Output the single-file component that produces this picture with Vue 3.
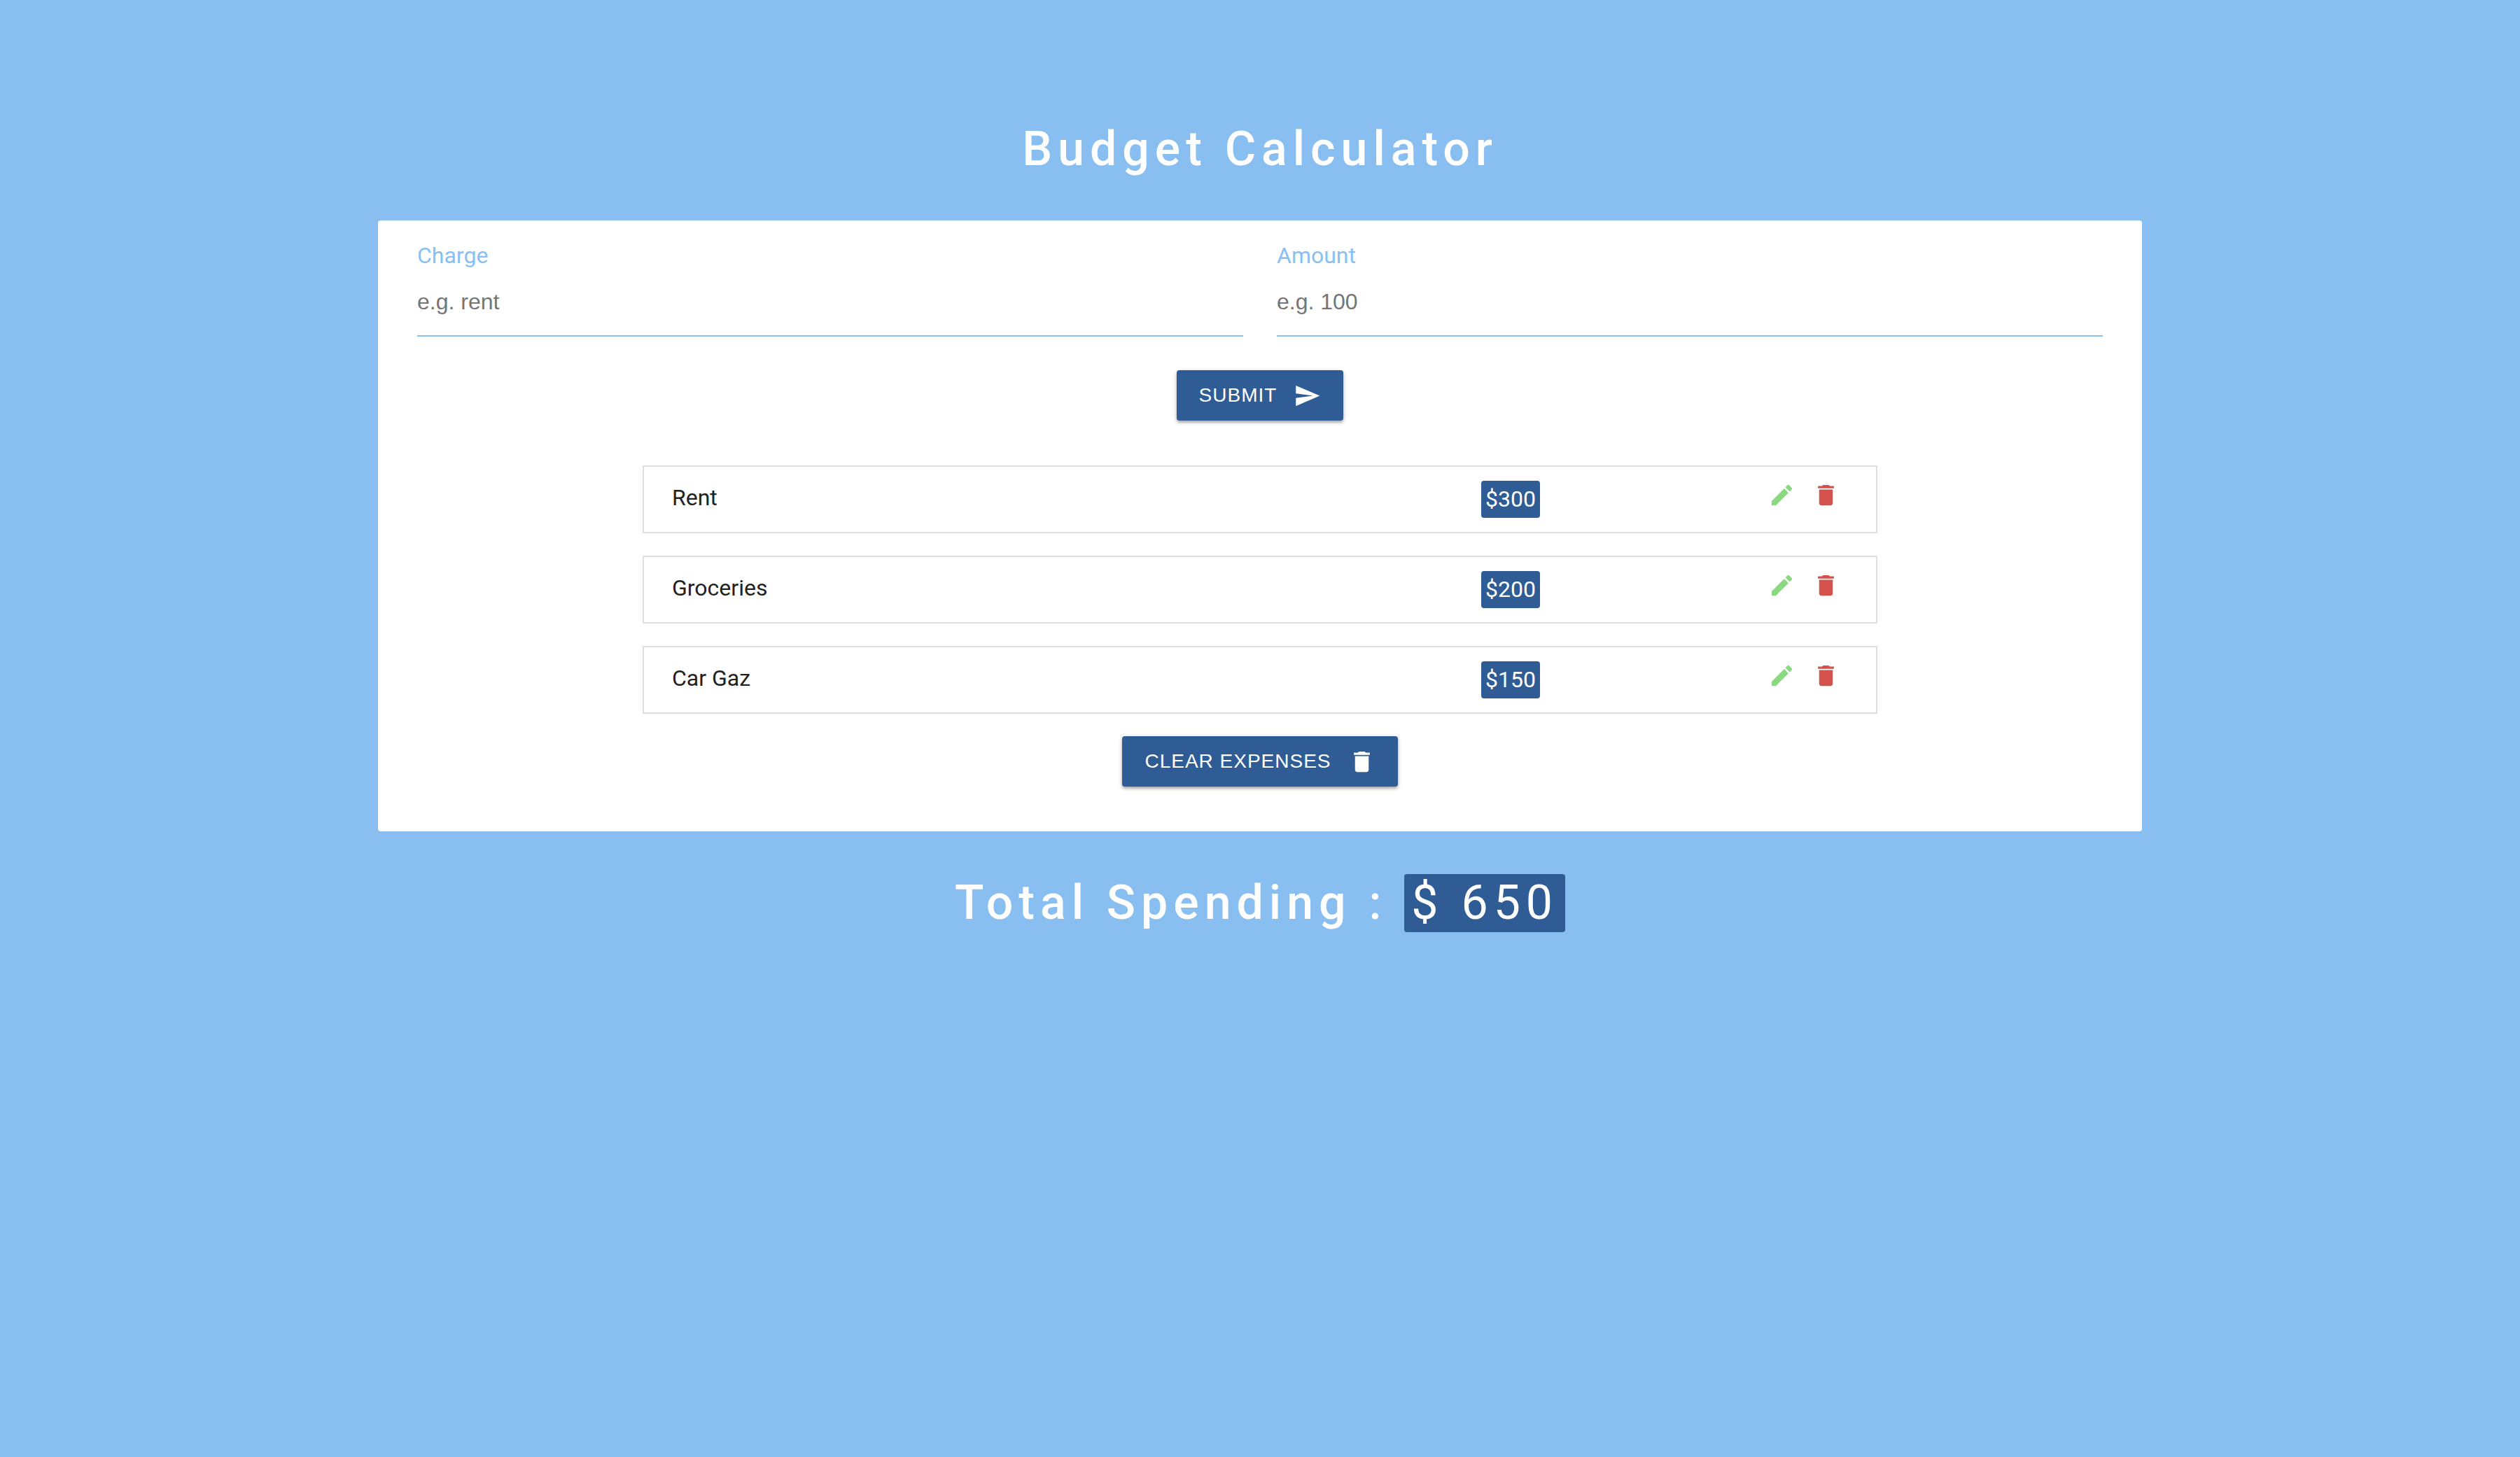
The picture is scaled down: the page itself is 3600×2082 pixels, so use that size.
<script setup>
import { computed, ref } from 'vue'

const charge = ref('')
const amount = ref('')
const expenses = ref([
  { id: 1, charge: 'Rent', amount: 300 },
  { id: 2, charge: 'Groceries', amount: 200 },
  { id: 3, charge: 'Car Gaz', amount: 150 },
])
const editing = ref(null)
const total = computed(() => expenses.value.reduce((sum, item) => sum + item.amount, 0))

function submit() {
  const value = Number(amount.value)
  if (!charge.value || !(value > 0)) return
  if (editing.value) {
    Object.assign(editing.value, { charge: charge.value, amount: value })
    editing.value = null
  } else {
    expenses.value.push({ id: Date.now(), charge: charge.value, amount: value })
  }
  charge.value = ''
  amount.value = ''
}

function edit(item) {
  editing.value = item
  charge.value = item.charge
  amount.value = String(item.amount)
}

function remove(item) {
  expenses.value = expenses.value.filter((other) => other !== item)
}
</script>

<template>
  <div class="page">
    <h1 class="heading">Budget Calculator</h1>
    <main class="card">
      <form class="form" @submit.prevent="submit">
        <div class="fields">
          <div class="field">
            <label for="charge">Charge</label>
            <input id="charge" v-model="charge" type="text" placeholder="e.g. rent" />
          </div>
          <div class="field">
            <label for="amount">Amount</label>
            <input id="amount" v-model="amount" type="text" inputmode="numeric" placeholder="e.g. 100" />
          </div>
        </div>
        <button class="btn" type="submit">
          Submit
          <svg class="icon" viewBox="0 0 24 24" aria-hidden="true"><path d="M2.01 21L23 12 2.01 3 2 10l15 2-15 2z" /></svg>
        </button>
      </form>
      <ul class="list">
        <li v-for="item in expenses" :key="item.id" class="item">
          <span>{{ item.charge }}</span>
          <span><span class="amount">${{ item.amount }}</span></span>
          <div class="actions">
            <button class="edit" type="button" aria-label="Edit" @click="edit(item)">
              <svg class="icon" viewBox="0 0 24 24" aria-hidden="true"><path d="M3 17.25V21h3.75L17.81 9.94l-3.75-3.75L3 17.25zM20.71 7.04c.39-.39.39-1.02 0-1.41l-2.34-2.34c-.39-.39-1.02-.39-1.41 0l-1.83 1.83 3.75 3.75 1.83-1.83z" /></svg>
            </button>
            <button class="delete" type="button" aria-label="Delete" @click="remove(item)">
              <svg class="icon" viewBox="0 0 24 24" aria-hidden="true"><path d="M6 19c0 1.1.9 2 2 2h8c1.1 0 2-.9 2-2V7H6v12zM19 4h-3.5l-1-1h-5l-1 1H5v2h14V4z" /></svg>
            </button>
          </div>
        </li>
      </ul>
      <button class="btn" type="button" @click="expenses = []">
        Clear expenses
        <svg class="icon" viewBox="0 0 24 24" aria-hidden="true"><path d="M6 19c0 1.1.9 2 2 2h8c1.1 0 2-.9 2-2V7H6v12zM19 4h-3.5l-1-1h-5l-1 1H5v2h14V4z" /></svg>
      </button>
    </main>
    <h1 class="heading">Total Spending : <span class="total">$ {{ total }}</span></h1>
  </div>
</template>

<style>
body {
  margin: 0;
  background: #89bef0;
}
</style>

<style scoped>
.page {
  box-sizing: border-box;
  min-height: 100vh;
  padding-top: 161px;
  background: #89bef0;
  color: #222;
  font-family: Roboto, sans-serif;
  font-size: 32px;
  line-height: 48px;
}
.heading {
  margin: 0;
  color: #fff;
  font-size: 68px;
  font-weight: 500;
  line-height: 104px;
  letter-spacing: 8px;
  text-align: center;
}
.card {
  box-sizing: border-box;
  display: flex;
  flex-direction: column;
  align-items: center;
  width: 70%;
  margin: 50px auto;
  padding: 26px 56px 64px;
  border-radius: 4px;
  background: #fff;
}
.form {
  display: flex;
  flex-direction: column;
  align-items: center;
  gap: 48px;
  width: 100%;
}
.fields {
  display: grid;
  grid-template-columns: 1fr 1fr;
  gap: 48px;
  width: 100%;
}
.field {
  display: flex;
  flex-direction: column;
}
.field label {
  color: #88c0f4;
}
.field input {
  box-sizing: border-box;
  width: 100%;
  height: 92px;
  padding: 0 0 6px;
  border: 0;
  border-bottom: 2px solid #88c0f4;
  background: transparent;
  color: #222;
  font: 32px "Liberation Sans", Arial, sans-serif;
  outline: 0;
}
.field input::placeholder {
  color: #757575;
}
.btn {
  display: flex;
  align-items: center;
  gap: 24px;
  height: 72px;
  padding: 0 32px;
  border: 0;
  border-radius: 4px;
  background: #2f5c94;
  box-shadow: 0 2px 6px rgba(0, 0, 0, 0.24), 0 3px 3px rgba(0, 0, 0, 0.16);
  color: #fff;
  font: 28px "Liberation Sans", Arial, sans-serif;
  letter-spacing: 1px;
  text-transform: uppercase;
  cursor: pointer;
}
.icon {
  display: block;
  width: 39px;
  height: 39px;
  fill: currentColor;
}
.list {
  display: flex;
  flex-direction: column;
  gap: 32px;
  box-sizing: border-box;
  width: 70%;
  min-width: 1764px;
  max-width: 100%;
  margin: 64px 0 32px;
  padding: 0;
  list-style: none;
}
.item {
  box-sizing: border-box;
  display: grid;
  grid-template-columns: 1fr 398px auto;
  min-height: 97px;
  padding: 20px 40px;
  border: 2px solid #dfdfdf;
}
.amount {
  display: inline-block;
  padding: 0 6px;
  border-radius: 4px;
  background: #2f5c94;
  color: #fff;
  line-height: 53px;
}
.actions {
  display: flex;
  align-items: flex-start;
}
.actions button {
  padding: 1px 12px;
  border: 0;
  background: transparent;
  cursor: pointer;
}
.edit {
  color: #8ad880;
}
.delete {
  color: #d4524e;
}
.total {
  display: inline-block;
  padding: 0 10px;
  border-radius: 4px;
  background: #2f5c94;
  font-weight: 400;
  line-height: 83px;
}
</style>
